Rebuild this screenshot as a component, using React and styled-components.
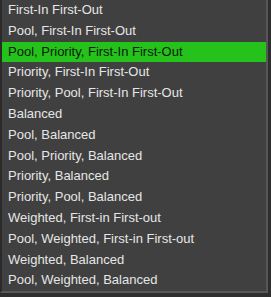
import React from "react";
import styled, { createGlobalStyle } from "styled-components";

const Global = createGlobalStyle`
  html, body { margin: 0; padding: 0; background: #2e2e2e; }
  #root { width: 271px; height: 297px; }
`;

const Frame = styled.div`
  width: 271px;
  height: 297px;
  background: #2e2e2e;
  overflow: hidden;
`;

const List = styled.ul`
  list-style: none;
  margin: 0;
  padding: 0;
  width: 264px;
  background: #404040;
  border-left: 2px solid #2a2a2a;
  border-right: 2px solid #565656;
  border-bottom: 2px solid #585858;
  font-family: "Liberation Sans", Arial, sans-serif;
  font-size: 13px;
`;

const Item = styled.li`
  height: 20.8px;
  line-height: 20.8px;
  padding-left: 6px;
  white-space: nowrap;
  color: ${(p) => (p.$selected ? "#0a1a08" : "#e6e6e6")};
  background: ${(p) => (p.$selected ? "#25c21b" : "transparent")};
`;

const items = [
  "First-In First-Out",
  "Pool, First-In First-Out",
  "Pool, Priority, First-In First-Out",
  "Priority, First-In First-Out",
  "Priority, Pool, First-In First-Out",
  "Balanced",
  "Pool, Balanced",
  "Pool, Priority, Balanced",
  "Priority, Balanced",
  "Priority, Pool, Balanced",
  "Weighted, First-in First-out",
  "Pool, Weighted, First-in First-out",
  "Weighted, Balanced",
  "Pool, Weighted, Balanced",
];

export default function App() {
  return (
    <>
      <Global />
      <Frame>
        <List>
          {items.map((t, i) => (
            <Item key={i} $selected={i === 2}>
              {t}
            </Item>
          ))}
        </List>
      </Frame>
    </>
  );
}
